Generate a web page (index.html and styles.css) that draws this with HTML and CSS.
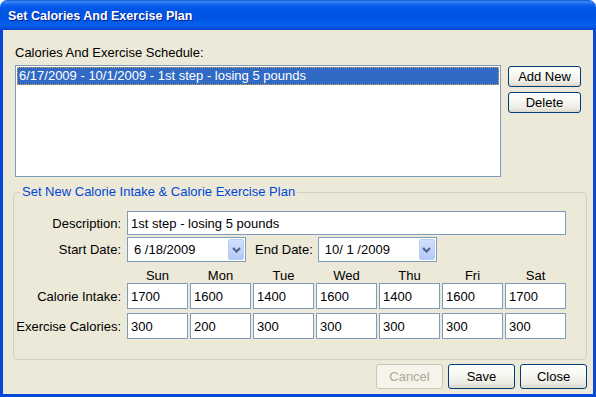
FILE: index.html
```html
<!DOCTYPE html>
<html>
<head>
<meta charset="utf-8">
<link rel="stylesheet" href="styles.css">
</head>
<body>
<div class="window">
  <div class="titlebar"><span class="title">Set Calories And Exercise Plan</span></div>
  <div class="client">
    <div class="schedule">
      <div class="label-top">Calories And Exercise Schedule:</div>
      <div class="schedule-row">
        <div class="listbox">
          <div class="item selected">6/17/2009 - 10/1/2009 - 1st step - losing 5 pounds</div>
        </div>
        <div class="side-buttons">
          <div class="btn side">Add New</div>
          <div class="btn side">Delete</div>
        </div>
      </div>
    </div>
    <fieldset class="group">
      <legend>Set New Calorie Intake &amp; Calorie Exercise Plan</legend>
      <div class="group-body">
        <div class="form-row">
          <span class="lbl">Description:</span>
          <div class="textbox desc">1st step - losing 5 pounds</div>
        </div>
        <div class="form-row dates">
          <span class="lbl">Start Date:</span>
          <div class="combo"><span class="combo-text">6 /18/2009</span><span class="drop"><svg width="9" height="6" viewBox="0 0 9 6"><path d="M1 1 L4.5 4.5 L8 1" fill="none" stroke="#4D6185" stroke-width="2"/></svg></span></div>
          <span class="lbl-inline">End Date:</span>
          <div class="combo"><span class="combo-text">10/ 1 /2009</span><span class="drop"><svg width="9" height="6" viewBox="0 0 9 6"><path d="M1 1 L4.5 4.5 L8 1" fill="none" stroke="#4D6185" stroke-width="2"/></svg></span></div>
        </div>
        <div class="form-row headers">
          <span class="lbl"></span>
          <div class="days">
            <span class="day">Sun</span><span class="day">Mon</span><span class="day">Tue</span><span class="day">Wed</span><span class="day">Thu</span><span class="day">Fri</span><span class="day">Sat</span>
          </div>
        </div>
        <div class="form-row">
          <span class="lbl">Calorie Intake:</span>
          <div class="days">
            <div class="textbox cell">1700</div><div class="textbox cell">1600</div><div class="textbox cell">1400</div><div class="textbox cell">1600</div><div class="textbox cell">1400</div><div class="textbox cell">1600</div><div class="textbox cell">1700</div>
          </div>
        </div>
        <div class="form-row second">
          <span class="lbl wide">Exercise Calories:</span>
          <div class="days">
            <div class="textbox cell">300</div><div class="textbox cell">200</div><div class="textbox cell">300</div><div class="textbox cell">300</div><div class="textbox cell">300</div><div class="textbox cell">300</div><div class="textbox cell">300</div>
          </div>
        </div>
      </div>
    </fieldset>
    <div class="footer">
      <div class="btn foot disabled">Cancel</div>
      <div class="btn foot">Save</div>
      <div class="btn foot">Close</div>
    </div>
  </div>
</div>
</body>
</html>
```
FILE: styles.css
```css
* { box-sizing: border-box; }
body {
  margin: 0;
  background: #ffffff;
  font-family: "Liberation Sans", Arial, sans-serif;
  font-size: 13px;
  color: #000;
}
.window {
  width: 596px;
  height: 397px;
  display: flex;
  flex-direction: column;
}
.titlebar {
  height: 30px;
  flex-shrink: 0;
  border-radius: 7px 7px 0 0;
  background: linear-gradient(to bottom, #0B5AD9 0px, #3F8CF3 2px, #1467F0 4px, #0058E8 8px, #0054E3 14px, #0056E6 20px, #0860EC 25px, #0552E0 28px, #0A3FC8 30px);
  padding: 2px 0 0 8px;
  display: flex;
  align-items: center;
}
.title {
  color: #fff;
  font-weight: bold;
  font-size: 12.5px;
  line-height: 15px;
  text-shadow: 1px 1px 0 #0A1E8A;
}
.client {
  flex: 1;
  background: #ECE9D8;
  border: 3px solid #0846DC;
  border-top: none;
  padding: 0 6px 0 10px;
  display: flex;
  flex-direction: column;
}
.schedule {
  padding-left: 2px;
  margin-top: 15px;
}
.label-top {
  height: 15px;
  line-height: 15px;
}
.schedule-row {
  display: flex;
  margin-top: 5px;
}
.listbox {
  width: 486px;
  height: 112px;
  background: #fff;
  border: 1px solid #7F9DB9;
  padding: 1px;
}
.item {
  height: 18px;
  line-height: 16px;
  padding-left: 1px;
  white-space: nowrap;
}
.item.selected {
  background: #316AC5;
  color: #fff;
  border: 1px dotted #D9A54A;
}
.side-buttons {
  margin-left: 7px;
  margin-top: 1px;
  display: flex;
  flex-direction: column;
  gap: 5px;
}
.btn {
  border: 1px solid #003C74;
  border-radius: 3px;
  background: linear-gradient(to bottom, #FFFFFF 0%, #F7F7F3 40%, #EEEDE6 75%, #DCD8CD 100%);
  display: flex;
  align-items: center;
  justify-content: center;
  color: #000;
}
.btn.side {
  width: 73px;
  height: 21px;
}
.group {
  margin: 8px 0 0 0;
  padding: 0;
  border: 1px solid #D0D0BF;
  border-radius: 4px;
  min-width: 0;
}
.group legend {
  color: #0046D5;
  margin-left: 6px;
  padding: 0 2px;
  height: 14px;
  line-height: 14px;
}
.group-body {
  padding: 12px 0 20px 0;
}
.form-row {
  display: flex;
  align-items: center;
}
.lbl {
  width: 107px;
  margin-right: 6px;
  text-align: right;
  flex-shrink: 0;
  white-space: nowrap;
}
.lbl.wide {
  margin-left: -4px;
  width: 111px;
}
.textbox {
  height: 24px;
  border: 1px solid #7F9DB9;
  background: #fff;
  padding-left: 3px;
  display: flex;
  align-items: center;
  white-space: nowrap;
}
.desc { width: 439px; }
.dates { margin-top: 2px; }
.combo {
  width: 119px;
  height: 25px;
  border: 1px solid #7F9DB9;
  background: #fff;
  display: flex;
  align-items: center;
  padding: 1px 1px 1px 6px;
}
.combo-text { flex: 1; }
.drop {
  width: 16px;
  height: 21px;
  border: 1px solid #B9CDF5;
  border-radius: 2px;
  background: linear-gradient(to bottom, #D2DFFC 0%, #C3D4FB 50%, #B4C8F8 100%);
  display: flex;
  align-items: center;
  justify-content: center;
}
.lbl-inline {
  margin: 0 5px 0 9px;
}
.headers {
  margin-top: 6px;
  height: 15px;
}
.days {
  display: flex;
  gap: 2px;
}
.day {
  width: 61px;
  text-align: center;
  line-height: 15px;
}
.cell {
  width: 61px;
  height: 26px;
}
.second { margin-top: 4px; }
.footer {
  display: flex;
  justify-content: flex-end;
  gap: 5px;
  margin-top: 4px;
}
.btn.foot {
  width: 67px;
  height: 25px;
}
.btn.disabled {
  border-color: #C9C7BA;
  background: #F5F4EA;
  color: #ACA899;
}
```
